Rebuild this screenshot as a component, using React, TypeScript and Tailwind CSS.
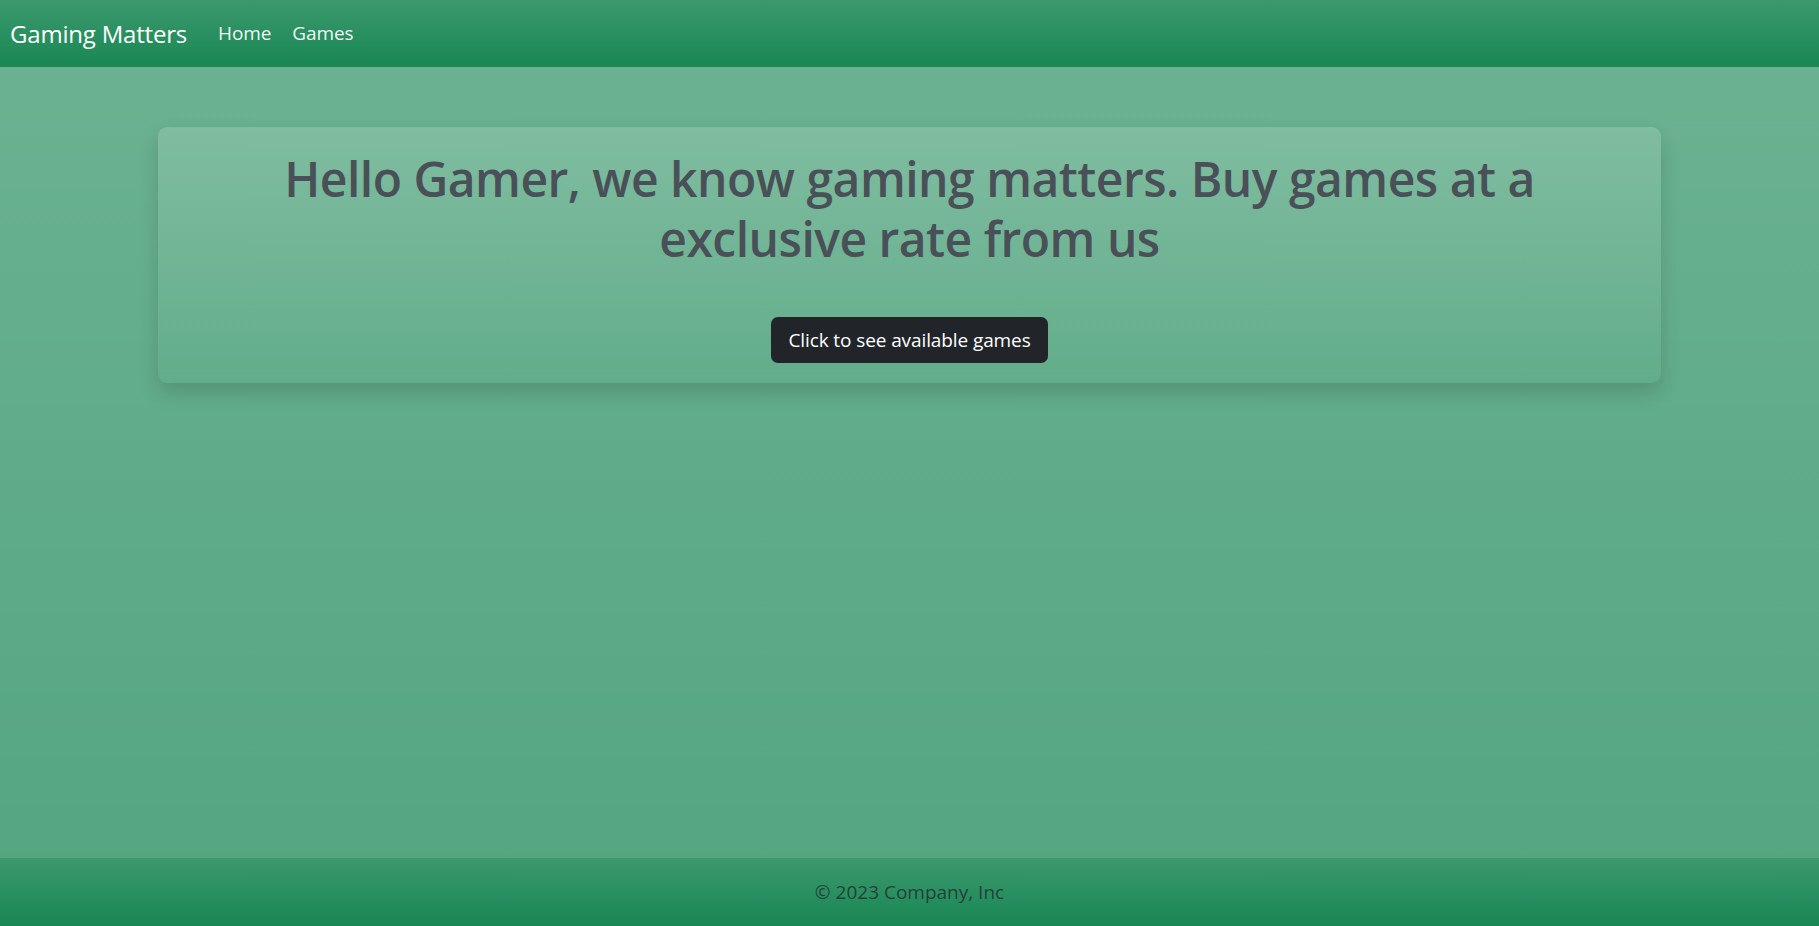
import React from "react";

const font = { fontFamily: '"Open Sans", "Noto Sans", sans-serif' };

function Navbar() {
  return (
    <nav className="h-[67px] flex items-center bg-[#198754] bg-linear-to-b from-white/15 to-transparent px-[10px]">
      <a className="text-[24px] tracking-[-0.2px] text-white mr-[31px] leading-none">Gaming Matters</a>
      <div className="flex items-center gap-[21px] text-[19px] tracking-[-0.1px] text-white/95">
        <a>Home</a>
        <a>Games</a>
      </div>
    </nav>
  );
}

function Hero() {
  return (
    <div className="mx-[158px] mt-[60px] rounded-[9px] bg-linear-to-b from-white/15 to-transparent shadow-[0_10px_20px_rgba(0,0,0,0.15)] pt-[22px] pb-[20px] flex flex-col items-center">
      <h1 className="text-[48px] leading-[60px] tracking-[-0.5px] font-semibold text-[#495057] text-center">
        Hello Gamer, we know gaming matters. Buy games at a
        <br />
        exclusive rate from us
      </h1>
      <button className="mt-[48px] h-[46px] px-[17px] rounded-[7px] bg-[#212529] text-white text-[19px] tracking-[-0.1px]">
        Click to see available games
      </button>
    </div>
  );
}

export default function App() {
  return (
    <div
      style={font}
      className="min-h-screen flex flex-col bg-[#53a57f] bg-linear-to-b from-white/15 to-transparent"
    >
      <Navbar />
      <main className="flex-1">
        <Hero />
      </main>
      <footer className="h-[68px] flex items-center justify-center bg-[#198754] bg-linear-to-b from-white/15 to-transparent">
        <p className="text-[19px] text-[#212529]/75">© 2023 Company, Inc</p>
      </footer>
    </div>
  );
}
